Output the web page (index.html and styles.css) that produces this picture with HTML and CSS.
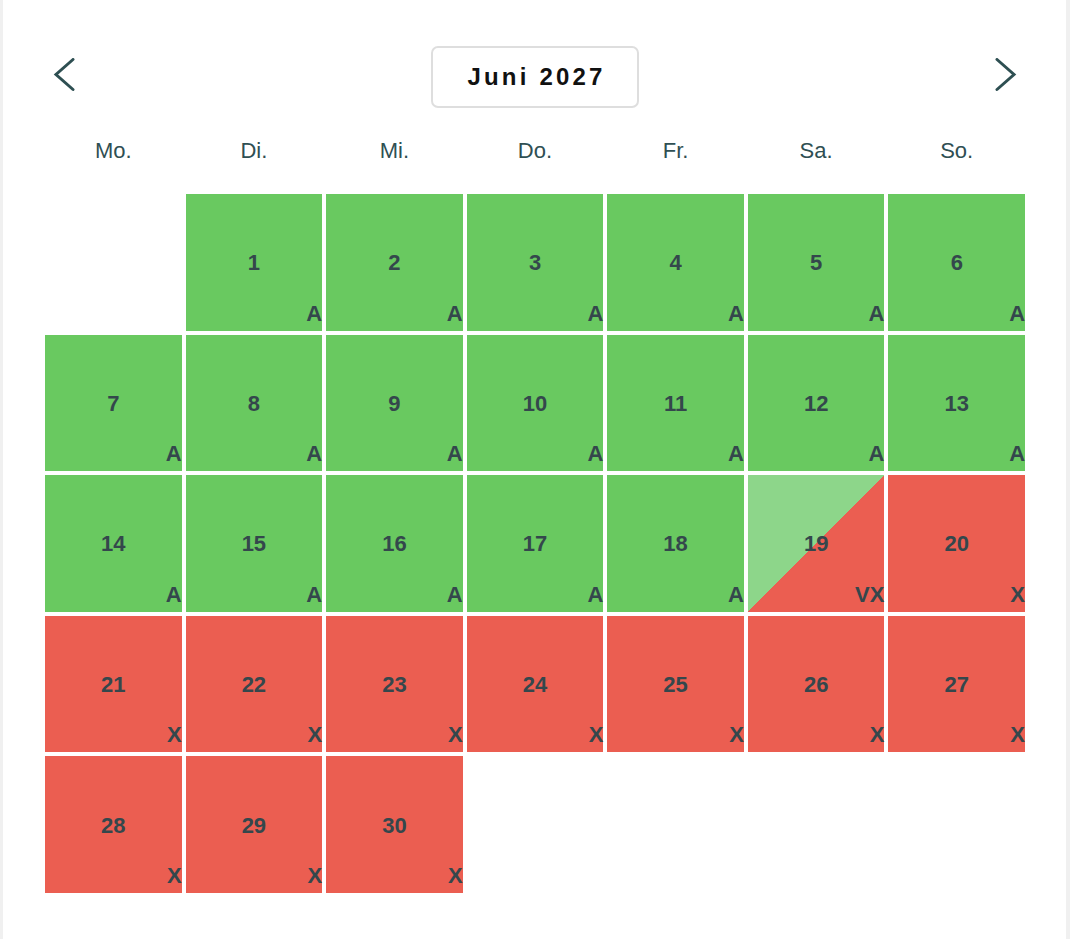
FILE: index.html
```html
<!DOCTYPE html>
<html lang="de">
<head>
<meta charset="utf-8">
<title>Juni 2027</title>
<link rel="stylesheet" href="styles.css">
</head>
<body>
<div class="card">
  <div class="header">
    <button class="nav" aria-label="Vorheriger Monat">
      <svg width="38" height="38" viewBox="0 0 38 38"><path d="M28 1.5 L11 16.5 L28 31.5" fill="none" stroke="#2e4f52" stroke-width="3" stroke-linecap="round" stroke-linejoin="miter"/></svg>
    </button>
    <div class="month">Juni 2027</div>
    <button class="nav" aria-label="Nächster Monat">
      <svg width="38" height="38" viewBox="0 0 38 38"><path d="M10 1.5 L27 16.5 L10 31.5" fill="none" stroke="#2e4f52" stroke-width="3" stroke-linecap="round" stroke-linejoin="miter"/></svg>
    </button>
  </div>
  <div class="weekdays">
    <div>Mo.</div><div>Di.</div><div>Mi.</div><div>Do.</div><div>Fr.</div><div>Sa.</div><div>So.</div>
  </div>
  <div class="days">
    <div class="day empty"></div>
    <div class="day free"><span class="num">1</span><span class="tag">A</span></div>
    <div class="day free"><span class="num">2</span><span class="tag">A</span></div>
    <div class="day free"><span class="num">3</span><span class="tag">A</span></div>
    <div class="day free"><span class="num">4</span><span class="tag">A</span></div>
    <div class="day free"><span class="num">5</span><span class="tag">A</span></div>
    <div class="day free"><span class="num">6</span><span class="tag">A</span></div>
    <div class="day free"><span class="num">7</span><span class="tag">A</span></div>
    <div class="day free"><span class="num">8</span><span class="tag">A</span></div>
    <div class="day free"><span class="num">9</span><span class="tag">A</span></div>
    <div class="day free"><span class="num">10</span><span class="tag">A</span></div>
    <div class="day free"><span class="num">11</span><span class="tag">A</span></div>
    <div class="day free"><span class="num">12</span><span class="tag">A</span></div>
    <div class="day free"><span class="num">13</span><span class="tag">A</span></div>
    <div class="day free"><span class="num">14</span><span class="tag">A</span></div>
    <div class="day free"><span class="num">15</span><span class="tag">A</span></div>
    <div class="day free"><span class="num">16</span><span class="tag">A</span></div>
    <div class="day free"><span class="num">17</span><span class="tag">A</span></div>
    <div class="day free"><span class="num">18</span><span class="tag">A</span></div>
    <div class="day split"><span class="num">19</span><span class="tag">VX</span></div>
    <div class="day booked"><span class="num">20</span><span class="tag">X</span></div>
    <div class="day booked"><span class="num">21</span><span class="tag">X</span></div>
    <div class="day booked"><span class="num">22</span><span class="tag">X</span></div>
    <div class="day booked"><span class="num">23</span><span class="tag">X</span></div>
    <div class="day booked"><span class="num">24</span><span class="tag">X</span></div>
    <div class="day booked"><span class="num">25</span><span class="tag">X</span></div>
    <div class="day booked"><span class="num">26</span><span class="tag">X</span></div>
    <div class="day booked"><span class="num">27</span><span class="tag">X</span></div>
    <div class="day booked"><span class="num">28</span><span class="tag">X</span></div>
    <div class="day booked"><span class="num">29</span><span class="tag">X</span></div>
    <div class="day booked"><span class="num">30</span><span class="tag">X</span></div>
  </div>
</div>
</body>
</html>
```

FILE: styles.css
```css
* { box-sizing: border-box; }

html, body {
  margin: 0;
  padding: 0;
  background: #f0f0f0;
  font-family: "Liberation Sans", Arial, Helvetica, sans-serif;
}

.card {
  background: #ffffff;
  margin: 0 4px 0 3px;
  min-height: 100vh;
  padding: 46px 41px 0 42px;
}

.header {
  display: flex;
  align-items: flex-start;
  justify-content: space-between;
  height: 62px;
}

.nav {
  background: none;
  border: 0;
  padding: 0;
  margin: 12px 0 0;
  width: 38px;
  height: 38px;
  cursor: pointer;
  display: block;
}

.nav svg { display: block; }

.month {
  width: 208px;
  height: 62px;
  border: 2px solid #dedede;
  border-radius: 7px;
  display: flex;
  align-items: center;
  justify-content: center;
  font-weight: bold;
  font-size: 24px;
  letter-spacing: 3.2px;
  padding-left: 3px;
  color: #111111;
}

.weekdays {
  display: grid;
  grid-template-columns: repeat(7, 1fr);
  gap: 4px;
  margin: 30px 0 30px;
  width: 980px;
}

.weekdays div {
  text-align: center;
  font-size: 22px;
  line-height: 26px;
  color: #2f4f53;
}

.days {
  display: grid;
  grid-template-columns: repeat(7, 1fr);
  gap: 4px;
  width: 980px;
}

.day {
  position: relative;
  aspect-ratio: 1 / 1;
  display: flex;
  align-items: center;
  justify-content: center;
  color: #34474c;
  font-weight: bold;
  font-size: 22px;
}

.day .num {
  line-height: 1;
  margin-top: 2px;
}

.day .tag {
  position: absolute;
  right: 0;
  bottom: 6px;
  line-height: 1;
  font-size: 22px;
}

.free { background: #69c960; }
.booked { background: #eb5e51; }
.split { background: linear-gradient(to bottom right, #8dd68a 50%, #eb5e51 50%); }
.empty { background: transparent; }
```
